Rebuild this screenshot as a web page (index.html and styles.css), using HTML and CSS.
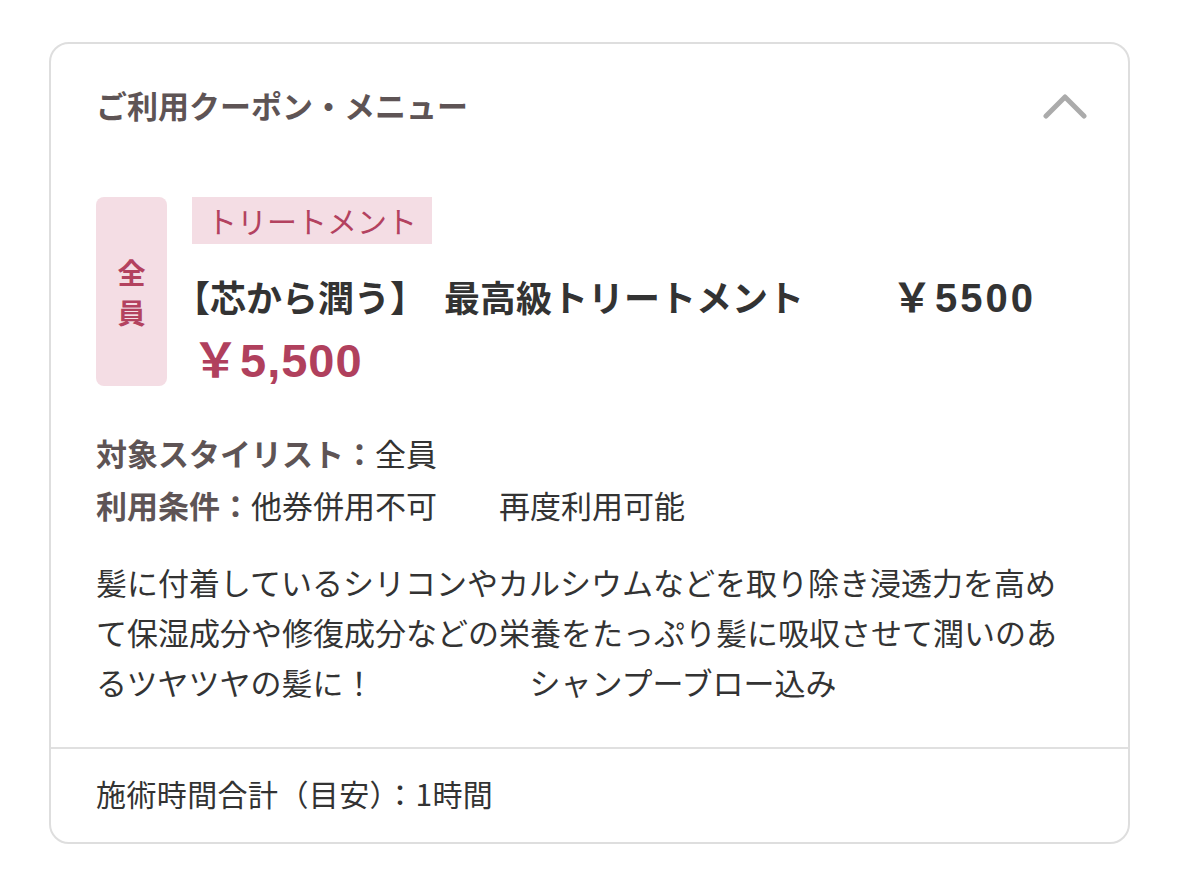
FILE: index.html
```html
<!DOCTYPE html>
<html lang="ja">

<head>
    <meta charset="UTF-8">
    <meta name="viewport" content="width=device-width, initial-scale=1.0">
    <title>ご利用クーポン・メニュー</title>
    <link rel="stylesheet" href="styles.css">
</head>

<body>
    <section class="card">
        <div class="card-head">
            <h2>ご利用クーポン・メニュー</h2>
            <svg class="chevron" width="44" height="25" viewBox="0 0 44 25">
                <polyline points="3,22 22,3 41,22" fill="none" stroke="#ababab" stroke-width="5" stroke-linecap="round" stroke-linejoin="round" />
            </svg>
        </div>

        <div class="coupon">
            <div class="badge">全<br>員</div>
            <div class="coupon-body">
                <span class="tag">トリートメント</span>
                <h3 class="coupon-title">【芯から潤う】　最高級トリートメント<span class="title-price">￥5500</span></h3>
                <p class="price">￥5,500</p>
            </div>
        </div>

        <div class="info">
            <p><span class="label">対象スタイリスト：</span>全員</p>
            <p><span class="label">利用条件：</span>他券併用不可　　再度利用可能</p>
        </div>

        <p class="desc">髪に付着しているシリコンやカルシウムなどを取り除き浸透力を高めて保湿成分や修復成分などの栄養をたっぷり髪に吸収させて潤いのあるツヤツヤの髪に！　　　　　シャンプーブロー込み</p>

        <div class="card-foot">施術時間合計（目安）：1時間</div>
    </section>
</body>

</html>
```

FILE: styles.css
```css
body {
    margin: 0;
    padding: 42px 0 0 49px;
    background: white;
    font-family: 'Noto Sans CJK JP', sans-serif;
    color: #333;
}

p,
h2,
h3 {
    margin: 0;
}

.card {
    box-sizing: border-box;
    width: 1081px;
    border: 2px solid #dedede;
    border-radius: 20px;
}

.card-head {
    display: flex;
    justify-content: space-between;
    align-items: center;
    padding: 41px 41px 0 45px;
}

.card-head h2 {
    font-size: 31px;
    line-height: 40px;
    font-weight: bold;
    color: #5e5455;
}

.chevron {
    margin-top: 2px;
}

.coupon {
    display: flex;
    gap: 25px;
    margin-top: 72px;
    padding: 0 45px;
}

.badge {
    flex: none;
    width: 71px;
    display: flex;
    flex-direction: column;
    justify-content: center;
    align-items: center;
    background: #f4dde4;
    border-radius: 8px;
    color: #b3425f;
    font-size: 28px;
    font-weight: bold;
    line-height: 40px;
    text-align: center;
}

.coupon-body {
    display: flex;
    flex-direction: column;
    align-items: flex-start;
}

.tag {
    height: 47px;
    line-height: 47px;
    padding: 0 15px 0 15px;
    background: #f4dde4;
    color: #b3425f;
    font-size: 30px;
}

.coupon-title {
    margin-top: 27px;
    font-size: 36px;
    line-height: 50px;
    font-weight: bold;
    color: #333;
    text-spacing-trim: trim-start;
}

.title-price {
    margin-left: 88px;
    font-family: 'Liberation Sans', 'Noto Sans CJK JP', sans-serif;
    font-size: 40px;
    letter-spacing: 3px;
}

.price {
    margin-top: 13px;
    font-family: 'Liberation Sans', 'Noto Sans CJK JP', sans-serif;
    font-size: 47px;
    line-height: 50px;
    font-weight: bold;
    letter-spacing: 1px;
    color: #b0405d;
}

.info {
    margin-top: 41px;
    padding: 0 45px;
    font-size: 31px;
    line-height: 52px;
    color: #333;
}

.label {
    font-weight: bold;
    color: #5e5455;
}

.desc {
    margin-top: 26px;
    padding: 0 45px 40px;
    font-size: 31px;
    line-height: 50px;
    color: #333;
}

.card-foot {
    border-top: 2px solid #e0e0e0;
    padding: 24px 45px 29px;
    font-size: 30px;
    line-height: 40px;
    letter-spacing: 0.4px;
    color: #333;
}
```
